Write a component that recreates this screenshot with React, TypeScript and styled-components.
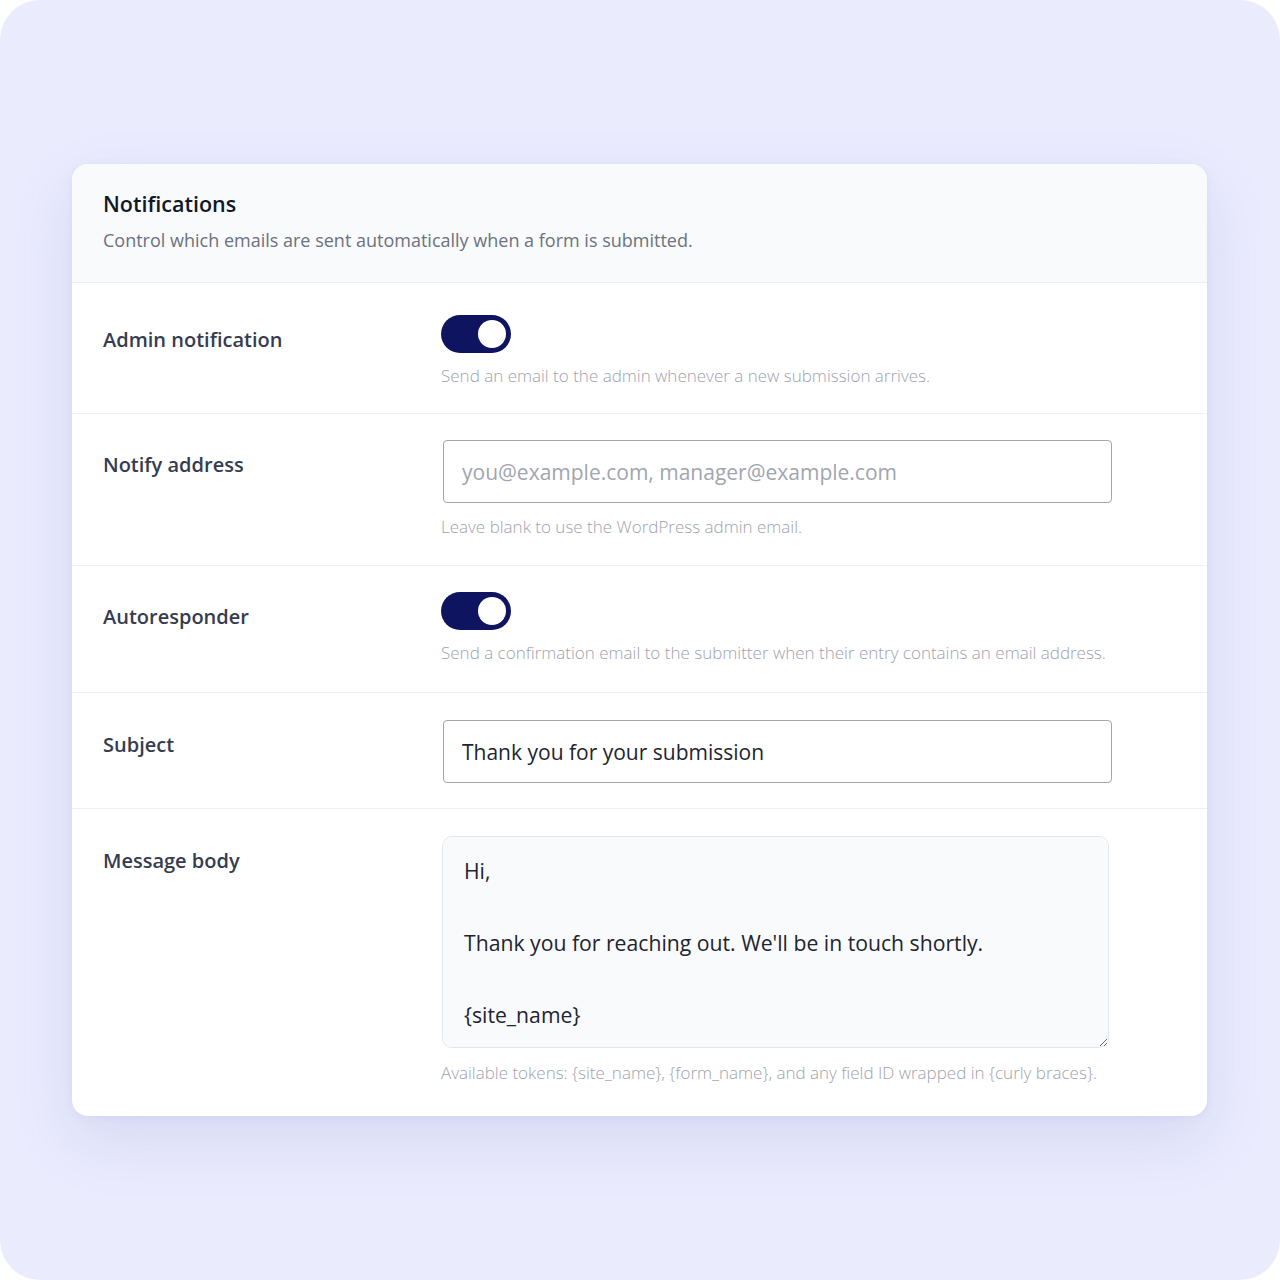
import React from "react";
import styled, { createGlobalStyle } from "styled-components";

const GlobalStyle = createGlobalStyle`
  * { box-sizing: border-box; }
  html, body { margin: 0; padding: 0; background: #ffffff; }
  body { font-family: "Open Sans", Lato, sans-serif; -webkit-font-smoothing: antialiased; }
`;

const Page = styled.div`
  min-height: 1280px;
  padding: 0 1px 0 0;
  display: flex;
  align-items: center;
  justify-content: center;
  background: #eaebfd;
  border-radius: 40px;
`;

const Card = styled.section`
  width: 1135px;
  background: #ffffff;
  border-radius: 16px;
  overflow: hidden;
  box-shadow: 0 24px 60px rgba(120, 125, 200, 0.16), 0 2px 8px rgba(120, 125, 200, 0.08);
`;

const Header = styled.header`
  padding: 25px 32px 29px 31px;
  background: #f8fafc;
  border-bottom: 1px solid #eceef3;
`;

const Title = styled.h1`
  margin: 0;
  font-size: 21.5px;
  line-height: 30px;
  font-weight: 600;
  color: #111827;
`;

const Subtitle = styled.p`
  margin: 8px 0 0;
  font-size: 18px;
  line-height: 26px;
  font-weight: 400;
  color: #6b7280;
`;

const Row = styled.div<{ $top: number; $bottom: number; $last?: boolean }>`
  display: grid;
  grid-template-columns: 306px 672px;
  column-gap: 32px;
  padding: ${({ $top }) => $top}px 32px ${({ $bottom }) => $bottom}px 31px;
  border-bottom: ${({ $last }) => ($last ? "none" : "1px solid #eef0f4")};
`;

const Label = styled.div`
  padding-top: 14px;
  font-size: 20px;
  line-height: 22px;
  font-weight: 600;
  color: #363c4f;
`;

const Control = styled.div`
  display: flex;
  flex-direction: column;
  align-items: flex-start;
`;

const Help = styled.p<{ $gap: number }>`
  margin: ${({ $gap }) => $gap}px 0 0;
  font-size: 17px;
  line-height: 24px;
  font-weight: 300;
  color: #9ea2b0;
`;

const Switch = styled.button<{ $on?: boolean }>`
  width: 70px;
  height: 38px;
  padding: 0 5px;
  border: none;
  border-radius: 19px;
  display: flex;
  align-items: center;
  justify-content: ${({ $on }) => ($on ? "flex-end" : "flex-start")};
  background: ${({ $on }) => ($on ? "#0f1461" : "#cbd0dc")};
  cursor: pointer;
`;

const Knob = styled.span`
  width: 28px;
  height: 28px;
  border-radius: 50%;
  background: #ffffff;
`;

const TextInput = styled.input`
  width: 669px;
  height: 63px;
  margin-left: 2px;
  padding: 0 18px;
  border: 1px solid #a3a6ae;
  border-radius: 4px;
  background: #ffffff;
  font-family: "Open Sans", Lato, sans-serif;
  font-size: 21px;
  color: #1f2430;
  outline: none;

  &::placeholder {
    color: #a1a5b0;
  }
`;

const TextArea = styled.textarea`
  width: 667px;
  height: 212px;
  margin-left: 1px;
  padding: 16px 21px;
  border: 1px solid #e3e6ec;
  border-radius: 10px;
  background: #f8fafc;
  font-family: "Open Sans", Lato, sans-serif;
  font-size: 21.2px;
  line-height: 36px;
  color: #1f2430;
  resize: vertical;
  outline: none;
`;

export default function App() {
  return (
    <>
      <GlobalStyle />
      <Page>
        <Card>
          <Header>
            <Title>Notifications</Title>
            <Subtitle>Control which emails are sent automatically when a form is submitted.</Subtitle>
          </Header>

          <Row $top={32} $bottom={25}>
            <Label>Admin notification</Label>
            <Control>
              <Switch $on role="switch" aria-checked="true">
                <Knob />
              </Switch>
              <Help $gap={11}>Send an email to the admin whenever a new submission arrives.</Help>
            </Control>
          </Row>

          <Row $top={26} $bottom={26}>
            <Label>Notify address</Label>
            <Control>
              <TextInput placeholder="you@example.com, manager@example.com" />
              <Help $gap={12}>Leave blank to use the WordPress admin email.</Help>
            </Control>
          </Row>

          <Row $top={26} $bottom={27}>
            <Label>Autoresponder</Label>
            <Control>
              <Switch $on role="switch" aria-checked="true">
                <Knob />
              </Switch>
              <Help $gap={11}>
                Send a confirmation email to the submitter when their entry contains an email address.
              </Help>
            </Control>
          </Row>

          <Row $top={27} $bottom={25}>
            <Label>Subject</Label>
            <Control>
              <TextInput defaultValue="Thank you for your submission" />
            </Control>
          </Row>

          <Row $top={27} $bottom={31} $last>
            <Label>Message body</Label>
            <Control>
              <TextArea
                defaultValue={"Hi,\n\nThank you for reaching out. We'll be in touch shortly.\n\n{site_name}"}
              />
              <Help $gap={13}>
                Available tokens: {"{site_name}"}, {"{form_name}"}, and any field ID wrapped in {"{curly braces}"}.
              </Help>
            </Control>
          </Row>
        </Card>
      </Page>
    </>
  );
}
